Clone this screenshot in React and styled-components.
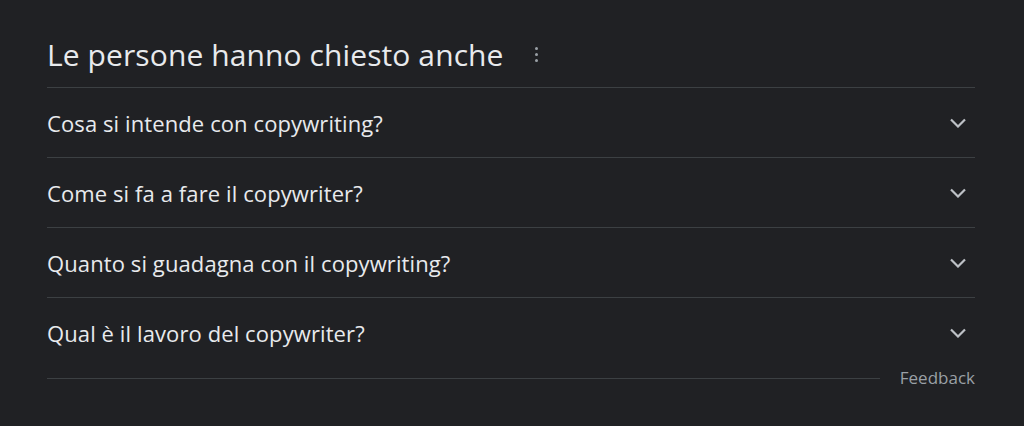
import React from "react";
import styled, { createGlobalStyle } from "styled-components";

const GlobalStyle = createGlobalStyle`
	html, body {
		margin: 0;
		padding: 0;
		background: #202124;
	}
	body {
		font-family: "Open Sans", Roboto, "Liberation Sans", sans-serif;
		color: #e8eaed;
	}
`;

const Page = styled.div`
	width: 1024px;
	height: 426px;
	background: #202124;
	padding: 0 49px 0 47px;
	box-sizing: border-box;
	overflow: hidden;
`;

const Header = styled.div`
	display: flex;
	align-items: center;
	height: 88px;
	padding-top: 22px;
	box-sizing: border-box;
	border-bottom: 1px solid #3c4043;
`;

const Title = styled.h2`
	margin: 0;
	font-size: 30px;
	font-weight: 400;
	line-height: 38px;
	letter-spacing: 0.1px;
	color: #e8eaed;
`;

const MenuButton = styled.div`
	display: flex;
	flex-direction: column;
	gap: 3px;
	margin-left: 31px;
	margin-top: 0;

	span {
		width: 3px;
		height: 3px;
		border-radius: 50%;
		background: #9aa0a6;
	}
`;

const Row = styled.div`
	display: flex;
	align-items: center;
	justify-content: space-between;
	height: 70px;
	box-sizing: border-box;
	border-bottom: ${(p) => (p.$last ? "none" : "1px solid #3c4043")};
`;

const Question = styled.span`
	font-size: 22px;
	line-height: 30px;
	letter-spacing: 0.1px;
	color: #e8eaed;
`;

const Chevron = styled.svg`
	width: 18px;
	height: 10px;
	margin-right: 8px;
	flex-shrink: 0;
`;

const FooterRow = styled.div`
	display: flex;
	align-items: center;
	height: 20px;
`;

const Rule = styled.div`
	flex: 1;
	height: 1px;
	background: #3c4043;
	margin-right: 20px;
`;

const Feedback = styled.span`
	font-size: 17px;
	line-height: 18px;
	color: #9aa0a6;
`;

const questions = [
	"Cosa si intende con copywriting?",
	"Come si fa a fare il copywriter?",
	"Quanto si guadagna con il copywriting?",
	"Qual è il lavoro del copywriter?",
];

const App = () => {
	return (
		<Page>
			<GlobalStyle />
			<Header>
				<Title>Le persone hanno chiesto anche</Title>
				<MenuButton>
					<span />
					<span />
					<span />
				</MenuButton>
			</Header>
			{questions.map((q, id) => (
				<Row key={id} $last={id === questions.length - 1}>
					<Question>{q}</Question>
					<Chevron viewBox="0 0 18 10">
						<path
							d="M2 1.5 L9 8.5 L16 1.5"
							fill="none"
							stroke="#bdc1c6"
							strokeWidth="2.2"
						/>
					</Chevron>
				</Row>
			))}
			<FooterRow>
				<Rule />
				<Feedback>Feedback</Feedback>
			</FooterRow>
		</Page>
	);
};

export default App;
